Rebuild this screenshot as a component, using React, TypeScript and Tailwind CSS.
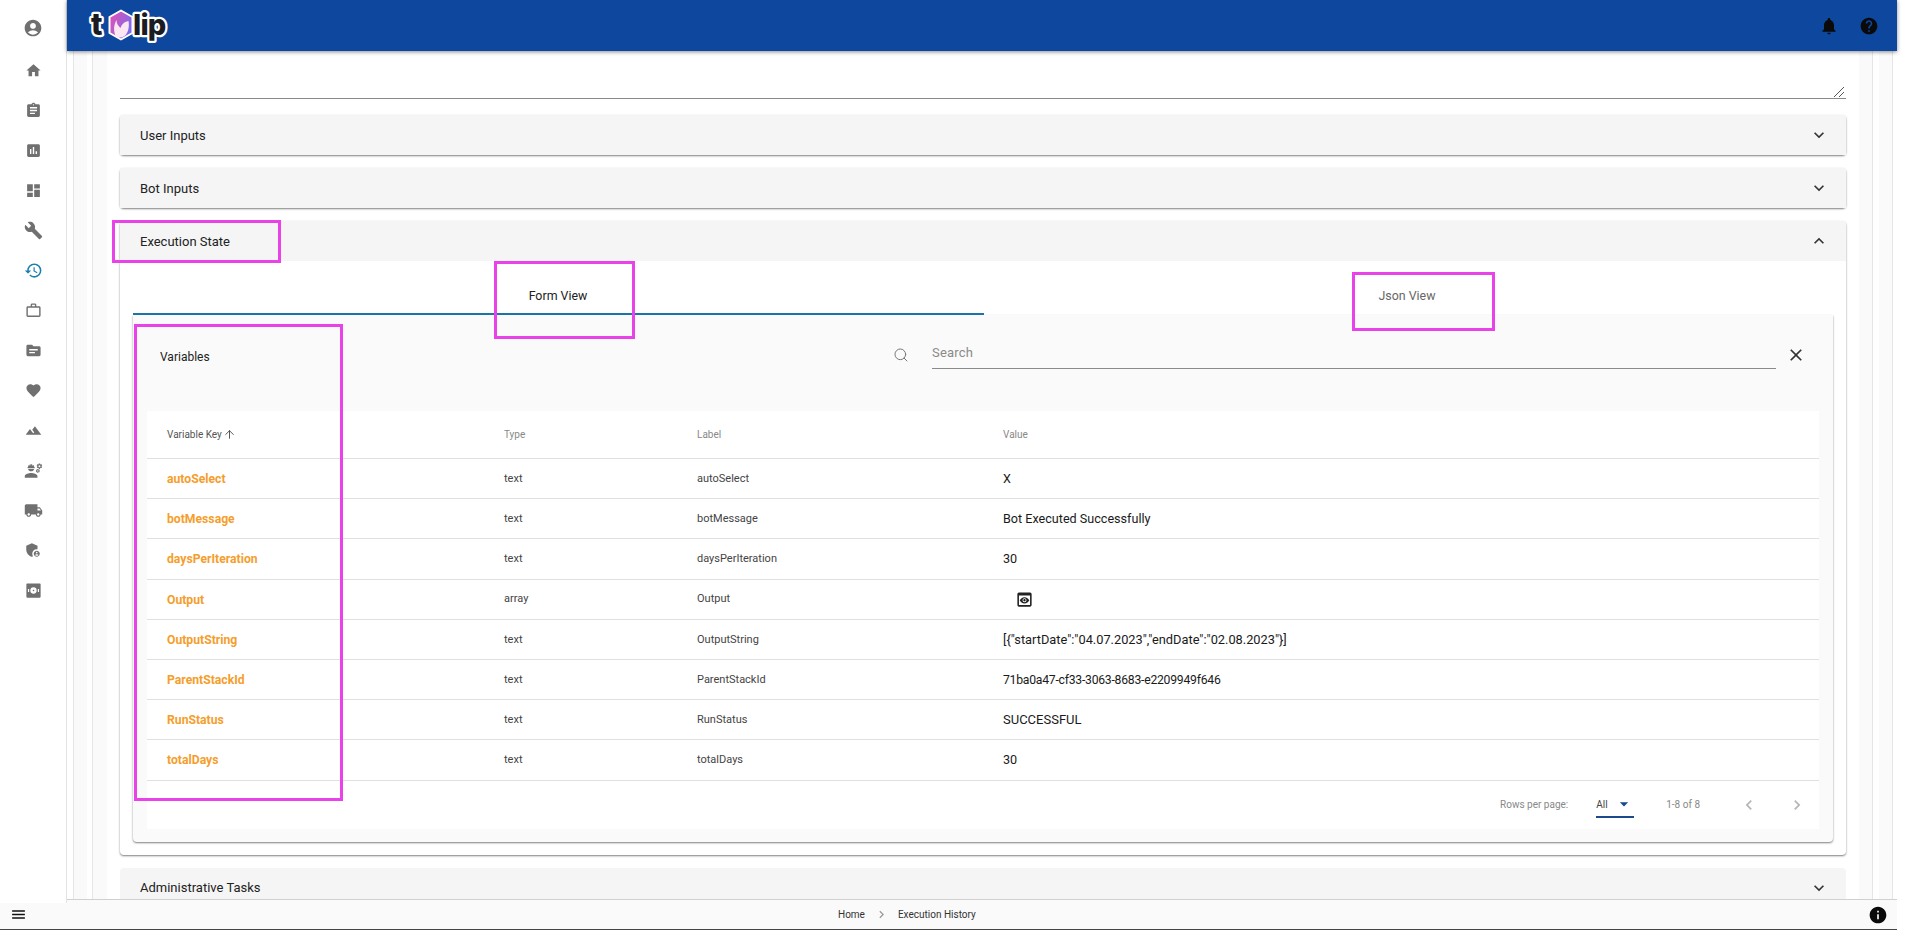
// App.tsx
import { ArrowUp, Search } from "lucide-react";
import {
  MdAccountCircle,
  MdAdminPanelSettings,
  MdArrowDropDown,
  MdAssessment,
  MdAssignment,
  MdBuild,
  MdChevronLeft,
  MdChevronRight,
  MdClose,
  MdDashboard,
  MdEngineering,
  MdExpandLess,
  MdExpandMore,
  MdFavorite,
  MdHelp,
  MdHome,
  MdInfo,
  MdLocalShipping,
  MdMenu,
  MdNotifications,
  MdOutlineWorkOutline,
  MdPreview,
  MdRestore,
  MdTerrain,
  MdTopic,
} from "react-icons/md";

const rows = [
  { key: "autoSelect", type: "text", label: "autoSelect", value: "X", size: "text-[12.6px]" },
  { key: "botMessage", type: "text", label: "botMessage", value: "Bot Executed Successfully", size: "text-[12.6px]" },
  { key: "daysPerIteration", type: "text", label: "daysPerIteration", value: "30", size: "text-[12.6px]" },
  { key: "Output", type: "array", label: "Output", value: "", size: "text-[12.6px]" },
  { key: "OutputString", type: "text", label: "OutputString", value: '[{"startDate":"04.07.2023","endDate":"02.08.2023"}]', size: "text-[12.8px]" },
  { key: "ParentStackId", type: "text", label: "ParentStackId", value: "71ba0a47-cf33-3063-8683-e2209949f646", size: "text-[12.2px] tracking-[-0.24px]" },
  { key: "RunStatus", type: "text", label: "RunStatus", value: "SUCCESSFUL", size: "text-[13px]" },
  { key: "totalDays", type: "text", label: "totalDays", value: "30", size: "text-[12.6px]" },
];

const ScanIcon = () => (
  <svg viewBox="0 0 24 24" className="h-[19px] w-[19px] fill-[#707070]">
    <path d="M4 3h16a1 1 0 0 1 1 1v16a1 1 0 0 1-1 1H4a1 1 0 0 1-1-1V4a1 1 0 0 1 1-1zm8 5a4 4 0 1 0 0 8 4 4 0 0 0 0-8zm0 3a1 1 0 1 1 0 2 1 1 0 0 1 0-2zM5 10v4h1.500v-4H5zm12.500 0v4H19v-4h-1.500z" fillRule="evenodd" />
  </svg>
);

const sideIcons = [
  <MdAccountCircle key="account" className="-translate-y-[2px] text-[20px]" />,
  <MdHome key="home" />,
  <MdAssignment key="assignment" />,
  <MdAssessment key="assessment" />,
  <MdDashboard key="dashboard" />,
  <MdBuild key="build" className="text-[19px]" />,
  <MdRestore key="history" className="text-[19px] text-[#1b7fae]" />,
  <MdOutlineWorkOutline key="work" />,
  <MdTopic key="topic" />,
  <MdFavorite key="favorite" />,
  <MdTerrain key="terrain" />,
  <MdEngineering key="engineering" className="text-[19px]" />,
  <MdLocalShipping key="shipping" className="text-[19px]" />,
  <MdAdminPanelSettings key="admin" className="text-[18px]" />,
  <ScanIcon key="scan" />,
];

const Logo = () => (
  <svg viewBox="0 0 82 42" className="h-[42px] w-[82px] overflow-visible">
    <defs>
      <linearGradient id="hex" x1="0" y1="0" x2="1" y2="0.6">
        <stop offset="0" stopColor="#ea4fae" />
        <stop offset="1" stopColor="#7a6cf0" />
      </linearGradient>
    </defs>
    <text x="5" y="30" className="font-['Inter',sans-serif] text-[30px] font-extrabold" stroke="#fff" strokeWidth="4.500" strokeLinejoin="round" fill="#1b1b22" paintOrder="stroke">t</text>
    <path d="M35 5.500L46.500 12v16L35 34.500 23.500 28V12z" fill="url(#hex)" stroke="#fff" strokeWidth="2" strokeLinejoin="round" />
    <path d="M29.500 31c-2-5-2-11 1-16 0 4 2 6 4 8 1-3 3-6 8-7 1 5 0 12-4 15-3 2-6 2-9 0z" fill="#fbe7f1" />
    <text x="47" y="30" className="font-['Inter',sans-serif] text-[29px] font-extrabold" stroke="#fff" strokeWidth="4.500" strokeLinejoin="round" fill="#1b1b22" paintOrder="stroke" letterSpacing="-0.8">lip</text>
  </svg>
);

const AccordionHead = ({ title, open }: { title: string; open?: boolean }) => (
  <div className="flex h-10 items-center justify-between rounded-t bg-[#f5f5f5] pl-5 pr-[17px] text-[13px] text-[#222]">
    <span className="pt-px">{title}</span>
    {open ? <MdExpandLess className="text-[20px] text-[#333]" /> : <MdExpandMore className="text-[20px] text-[#333]" />}
  </div>
);

const App = () => {
  return (
    <div className="flex h-[937px] w-[1920px] flex-col overflow-hidden bg-white font-['Roboto',sans-serif]">
      <div className="flex h-[899px]">
        {/* sidebar */}
        <aside className="relative z-10 flex h-[903px] w-[67px] shrink-0 flex-col items-center gap-5 border-r border-[#e2e2e2] bg-white pt-5 text-[17px] text-[#707070]">
          {sideIcons.map((icon, i) => (
            <div key={i} className="flex h-5 w-5 items-center justify-center">
              {icon}
            </div>
          ))}
        </aside>

        <div className="flex w-[1830px] shrink-0 flex-col">
          <header className="relative z-10 flex h-[51px] shrink-0 items-center justify-between bg-[#0e479e] pl-[19px] pr-[18px] shadow-[0_1px_4px_rgba(0,0,0,0.45)]">
            <Logo />
            <div className="flex items-center gap-[20px] text-[20px] text-[#0a0a0a]">
              <MdNotifications />
              <MdHelp />
            </div>
          </header>

          {/* nested scroll panes */}
          <main className="min-h-0 flex-1 overflow-hidden pl-[6px] pr-[4px]">
            <div className="h-full border-x border-[#e6e6e6] bg-[#fafafa] pl-[13px] pr-[13px]">
              <div className="h-full bg-white pl-[5px] pr-[6px]">
                <div className="h-full border-x border-[#e6e6e6] bg-[#fafafa] pl-[14px] pr-[13px]">
                  <div className="h-full bg-white px-[13px]">
                    <div className="relative">
                      <textarea className="block h-[48px] w-full resize-none border-b border-[#8a8a8a] outline-none" readOnly />
                      <svg viewBox="0 0 12 12" className="absolute bottom-[1px] right-[1px] h-3 w-3 stroke-[#555]" strokeWidth="1">
                        <path d="M1 11L11 1M6 11l5-5" />
                      </svg>
                    </div>

                    <div className="mt-[16px] flex flex-col gap-[13px]">
                      <div className="rounded shadow-[0_1px_2px_rgba(0,0,0,0.5)]">
                        <AccordionHead title="User Inputs" />
                      </div>
                      <div className="rounded shadow-[0_1px_2px_rgba(0,0,0,0.5)]">
                        <AccordionHead title="Bot Inputs" />
                      </div>

                      <div className="rounded bg-white shadow-[0_1px_2px_rgba(0,0,0,0.5)]">
                        <AccordionHead title="Execution State" open />
                        <div className="px-[13px] pb-[13px]">
                          {/* tabs */}
                          <div className="flex h-[54px] text-[12.4px]">
                            <div className="flex w-[851px] justify-center border-b-2 border-[#1b74a8] pt-[26px] pr-[1px] text-[#222]">
                              Form View
                            </div>
                            <div className="flex flex-1 justify-center pt-[26px] pr-[3px] text-[#666]">Json View</div>
                          </div>

                          {/* variables card */}
                          <div className="rounded-b bg-[#fafafa] px-[14px] pb-[13px] shadow-[0_1px_2px_rgba(0,0,0,0.5)]">
                            <div className="flex h-[96px] items-start">
                              <div className="mt-[33px] w-[746px] pl-[13px] text-[12px] text-[#222]">Variables</div>
                              <Search className="mt-[32px] h-4 w-4 text-[#777]" strokeWidth={1.5} />
                              <div className="ml-[23px] mt-[29px] flex h-[25px] w-[844px] items-center border-b border-[#8a8a8a] pb-[6px] text-[13px] tracking-[0.2px] text-[#8a8a8a]">
                                Search
                              </div>
                              <MdClose className="ml-[10px] mt-[30px] text-[20px] text-[#333]" />
                            </div>

                            <div className="bg-white">
                              <div className="grid h-[48px] grid-cols-[357px_193px_306px_1fr] items-center border-b border-[#e0e0e0] text-[10px] text-[#888]">
                                <div className="flex items-center gap-px pl-5 text-[#555]">
                                  Variable Key <ArrowUp className="h-[13px] w-[13px] text-[#333]" strokeWidth={1.5} />
                                </div>
                                <div>Type</div>
                                <div>Label</div>
                                <div>Value</div>
                              </div>
                              {rows.map((r) => (
                                <div key={r.key} className="grid h-[40.2px] grid-cols-[357px_193px_306px_1fr] items-center border-b border-[#e0e0e0] text-[11px] text-[#444]">
                                  <div className="pl-5 pt-px text-[12.2px] font-bold text-[#f59e2c]">{r.key}</div>
                                  <div className="pt-px">{r.type}</div>
                                  <div className="pt-px">{r.label}</div>
                                  <div className={`${r.size} pt-px text-[#1a1a1a]`}>
                                    {r.key === "Output" ? <MdPreview className="ml-[12px] text-[19px] text-[#222]" /> : r.value}
                                  </div>
                                </div>
                              ))}
                              <div className="flex h-[48px] items-center justify-end pr-[12px] text-[10px] text-[#888]">
                                <span>Rows per page:</span>
                                <div className="ml-[28px] flex h-[27px] w-[38px] items-center justify-between border-b-2 border-[#1a4a8c] pt-[1px] text-[#444]">
                                  <span>All</span>
                                  <MdArrowDropDown className="text-[20px] text-[#1a4a8c]" />
                                </div>
                                <span className="ml-[32px]">1-8 of 8</span>
                                <MdChevronLeft className="ml-[39px] text-[20px] text-[#b5b5b5]" />
                                <MdChevronRight className="ml-[28px] text-[20px] text-[#b5b5b5]" />
                              </div>
                            </div>
                          </div>
                        </div>
                      </div>

                      <AccordionHead title="Administrative Tasks" />
                    </div>
                  </div>
                </div>
              </div>
            </div>
          </main>
        </div>
      </div>

      <footer className="relative flex h-[31px] w-[1897px] shrink-0 items-center border-y border-t-[#d0d0d0] border-b-[#444] bg-[#fafafa] pl-[10px] pr-[9px]">
        <MdMenu className="text-[17px] text-[#111]" />
        <div className="ml-[811px] flex items-center text-[10px] text-[#333]">
          <span>Home</span>
          <MdChevronRight className="mx-[9px] text-[15px] text-[#999]" />
          <span>Execution History</span>
        </div>
        <MdInfo className="ml-auto text-[20px] text-[#0a0a0a]" />
      </footer>

      {/* annotation boxes drawn over the screenshot */}
      <div className="pointer-events-none absolute left-[112px] top-[220px] z-20 h-[43px] w-[169px] border-[3px] border-[#e942e9]" />
      <div className="pointer-events-none absolute left-[494px] top-[261px] z-20 h-[78px] w-[141px] border-[3px] border-[#e942e9]" />
      <div className="pointer-events-none absolute left-[1352px] top-[272px] z-20 h-[59px] w-[143px] border-[3px] border-[#e942e9]" />
      <div className="pointer-events-none absolute left-[134px] top-[324px] z-20 h-[477px] w-[209px] border-[3px] border-[#e942e9]" />
    </div>
  );
};

export default App;
